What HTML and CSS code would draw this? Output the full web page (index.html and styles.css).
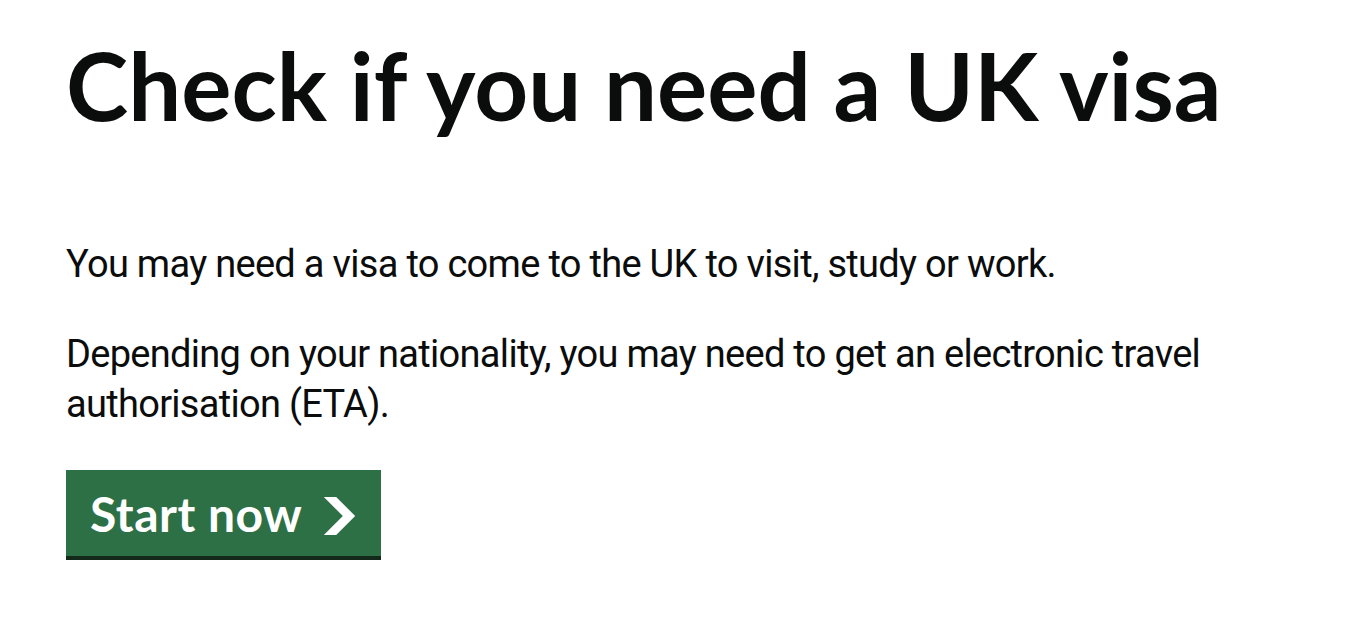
FILE: index.html
```html
<!DOCTYPE html>
<html lang="en">
<head>
<meta charset="utf-8">
<title>Check if you need a UK visa</title>
<link rel="stylesheet" href="styles.css">
</head>
<body>
<main class="page">
  <h1 class="heading-xl">Check if you need a UK visa</h1>
  <p class="body">You may need a visa to come to the UK to visit, study or work.</p>
  <p class="body">Depending on your nationality, you may need to get an electronic travel authorisation (ETA).</p>
  <a class="button-start" href="#" role="button">Start now
    <svg class="start-icon" xmlns="http://www.w3.org/2000/svg" width="35" height="38" viewBox="0 0 33 40" aria-hidden="true" focusable="false">
      <path fill="currentColor" d="M0 0h13l20 20-20 20H0l20-20z"/>
    </svg>
  </a>
</main>
</body>
</html>
```
FILE: styles.css
```css
html, body {
  margin: 0;
  padding: 0;
  background: #ffffff;
}

.page {
  padding: 35px 66px 40px 66px;
  max-width: 1180px;
  color: #0b0c0c;
}

.heading-xl {
  margin: 0 0 104px 0;
  font-family: "Lato", "Liberation Sans", sans-serif;
  font-weight: 700;
  font-size: 94px;
  line-height: 100px;
  letter-spacing: 0;
  color: #0b0c0c;
}

.body {
  margin: 0 0 40px 0;
  font-family: "Roboto", "Liberation Sans", sans-serif;
  font-weight: 400;
  font-size: 38px;
  line-height: 50px;
  letter-spacing: -0.7px;
  color: #0b0c0c;
  max-width: 1180px;
}

.button-start {
  display: inline-flex;
  align-items: flex-start;
  justify-content: center;
  margin-top: 1px;
  padding: 16px 20px 14px 20px;
  border: 4px solid transparent;
  background: #2e7045;
  box-shadow: 0 4px 0 #13291a;
  color: #ffffff;
  text-decoration: none;
  font-family: "Lato", "Liberation Sans", sans-serif;
  font-weight: 700;
  font-size: 48px;
  line-height: 48px;
  letter-spacing: 0.5px;
}

.start-icon {
  margin-left: 20px;
  align-self: center;
  flex-shrink: 0;
  position: relative;
  top: 2px;
}
```
